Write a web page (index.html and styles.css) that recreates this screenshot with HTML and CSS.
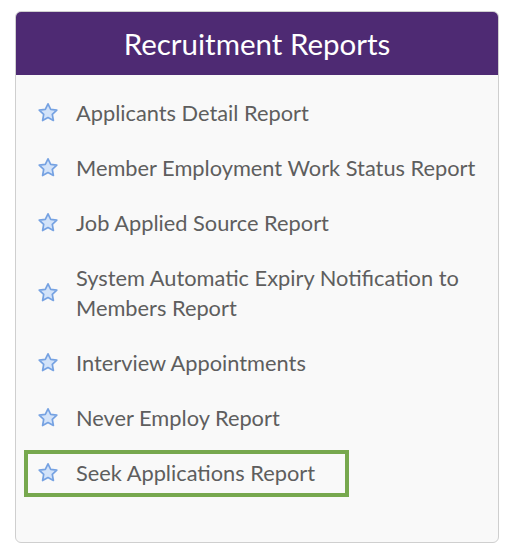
FILE: index.html
```html
<!DOCTYPE html>
<html lang="en">
  <head>
    <meta charset="UTF-8" />
    <title>Recruitment Reports</title>
    <link rel="stylesheet" href="styles.css">
  </head>
  <body>
    <div class="card">
      <h1 class="card-title">Recruitment Reports</h1>
      <ul class="report-list">
        <li class="report"><svg class="star" viewBox="0 0 24 24"><path d="M12 2.8l2.7 5.6 6.1.8-4.5 4.2 1.1 6.1L12 16.6l-5.4 2.9 1.1-6.1-4.5-4.2 6.1-.8z"/></svg><span>Applicants Detail Report</span></li>
        <li class="report"><svg class="star" viewBox="0 0 24 24"><path d="M12 2.8l2.7 5.6 6.1.8-4.5 4.2 1.1 6.1L12 16.6l-5.4 2.9 1.1-6.1-4.5-4.2 6.1-.8z"/></svg><span>Member Employment Work Status Report</span></li>
        <li class="report"><svg class="star" viewBox="0 0 24 24"><path d="M12 2.8l2.7 5.6 6.1.8-4.5 4.2 1.1 6.1L12 16.6l-5.4 2.9 1.1-6.1-4.5-4.2 6.1-.8z"/></svg><span>Job Applied Source Report</span></li>
        <li class="report"><svg class="star" viewBox="0 0 24 24"><path d="M12 2.8l2.7 5.6 6.1.8-4.5 4.2 1.1 6.1L12 16.6l-5.4 2.9 1.1-6.1-4.5-4.2 6.1-.8z"/></svg><span>System Automatic Expiry Notification to Members Report</span></li>
        <li class="report"><svg class="star" viewBox="0 0 24 24"><path d="M12 2.8l2.7 5.6 6.1.8-4.5 4.2 1.1 6.1L12 16.6l-5.4 2.9 1.1-6.1-4.5-4.2 6.1-.8z"/></svg><span>Interview Appointments</span></li>
        <li class="report"><svg class="star" viewBox="0 0 24 24"><path d="M12 2.8l2.7 5.6 6.1.8-4.5 4.2 1.1 6.1L12 16.6l-5.4 2.9 1.1-6.1-4.5-4.2 6.1-.8z"/></svg><span>Never Employ Report</span></li>
        <li class="report highlighted"><svg class="star" viewBox="0 0 24 24"><path d="M12 2.8l2.7 5.6 6.1.8-4.5 4.2 1.1 6.1L12 16.6l-5.4 2.9 1.1-6.1-4.5-4.2 6.1-.8z"/></svg><span>Seek Applications Report</span></li>
      </ul>
    </div>
  </body>
</html>
```

FILE: styles.css
```css
body {
  margin: 0;
  padding: 11px 27px 12px 15px;
  background-color: #fff;
  font-family: Lato, "Open Sans", sans-serif;
}
.card {
  width: 484px;
  height: 532px;
  box-sizing: border-box;
  border: 1px solid #cfcfcf;
  border-radius: 6px;
  background-color: #f9f9f9;
  overflow: hidden;
}
.card-title {
  margin: 0;
  height: 63px;
  background-color: #4e2a73;
  color: #fff;
  font-size: 29.5px;
  font-weight: 400;
  line-height: 63px;
  text-align: center;
}
.report-list {
  list-style: none;
  margin: 0;
  padding: 15px 0 0 8px;
}
.report {
  display: flex;
  align-items: center;
  width: 325px;
  margin-bottom: 8px;
  box-sizing: border-box;
  border: 4px solid transparent;
  padding: 4px 0 5px 8px;
  color: #5e5e5e;
  font-size: 21.8px;
  line-height: 30px;
}
.report span {
  width: 410px;
  flex: none;
}
.highlighted {
  border-color: #77a84e;
}
.star {
  width: 24px;
  height: 24px;
  flex: none;
  margin-right: 16px;
  fill: #d3e3f9;
  stroke: #76a2e2;
  stroke-width: 1.7;
  stroke-linejoin: round;
}
```
